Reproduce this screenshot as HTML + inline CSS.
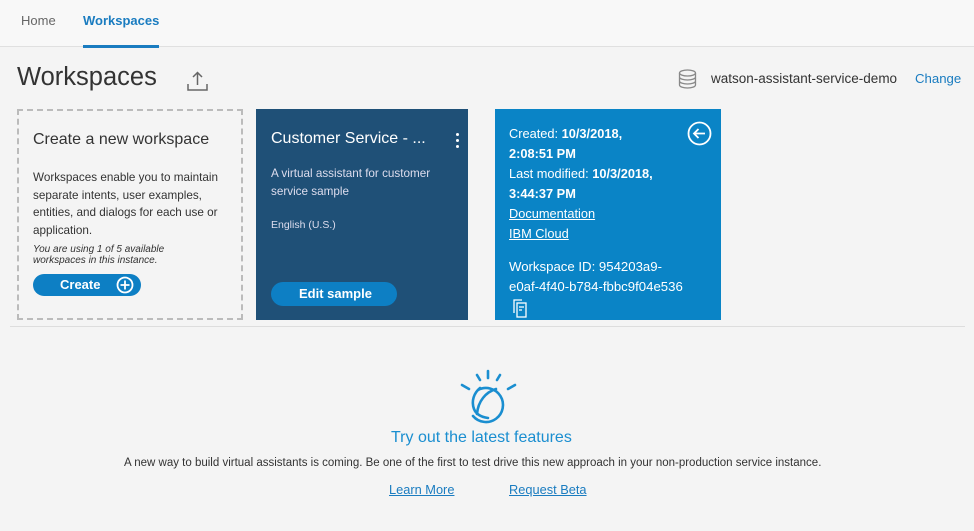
<!DOCTYPE html>
<html><head><meta charset="utf-8"><style>
*{margin:0;padding:0;box-sizing:border-box}
body{width:974px;height:531px;background:#f4f4f4;font-family:"Liberation Sans",sans-serif;position:relative;overflow:hidden;color:#333}
.a{position:absolute;white-space:nowrap}
.hdr{position:absolute;left:0;top:0;width:974px;height:47px;background:#f8f8f8;border-bottom:1px solid #e0e0e0}
.card{position:absolute;top:109px;height:211px}
.u{text-decoration:underline}
</style></head><body>
<div class="hdr"></div>
<div class="a" style="left:21px;top:13px;font-size:13px;color:#666">Home</div>
<div class="a" style="left:83px;top:13px;font-size:13px;color:#1a7cc0;font-weight:bold">Workspaces</div>
<div class="a" style="left:83px;top:45px;width:76px;height:3px;background:#1a7cc0"></div>

<div class="a" style="left:17px;top:63px;font-size:25.5px;color:#333">Workspaces</div>
<svg class="a" style="left:187px;top:71px" width="21" height="20" viewBox="0 0 21 20" fill="none" stroke="#666" stroke-width="1.5"><path d="M10.5 14V2M6 6l4.5-4.5L15 6M1 13v6h19v-6"/></svg>

<svg class="a" style="left:678px;top:69px" width="19" height="20" viewBox="0 0 19 20" fill="none" stroke="#888" stroke-width="1.3"><ellipse cx="9.5" cy="4" rx="8" ry="3"/><path d="M1.5 4v12c0 1.7 3.6 3 8 3s8-1.3 8-3V4M1.5 8c0 1.7 3.6 3 8 3s8-1.3 8-3M1.5 12c0 1.7 3.6 3 8 3s8-1.3 8-3"/></svg>
<div class="a" style="left:711px;top:71px;font-size:13.5px;color:#333">watson-assistant-service-demo</div>
<div class="a" style="left:915px;top:71px;font-size:13.2px;color:#1a7cc0">Change</div>

<div class="card" style="left:17px;width:226px;border:2px dashed #bbb"></div>
<div class="a" style="left:33px;top:131px;font-size:16px;color:#333">Create a new workspace</div>
<div class="a" style="left:33px;top:169px;font-size:11.7px;line-height:17.5px;color:#333">Workspaces enable you to maintain<br>separate intents, user examples,<br>entities, and dialogs for each use or<br>application.</div>
<div class="a" style="left:33px;top:244px;font-size:10px;line-height:11px;font-style:italic;color:#333">You are using 1 of 5 available<br>workspaces in this instance.</div>
<div class="a" style="left:33px;top:274px;width:108px;height:22px;border-radius:11px;background:#0d7fc4;color:#fff;font-size:13px;font-weight:bold;padding:3px 0 0 27px">Create</div>
<svg class="a" style="left:116px;top:276px" width="18" height="18" viewBox="0 0 18 18" fill="none" stroke="#fff" stroke-width="1.8"><circle cx="9" cy="9" r="7.5"/><path d="M9 4.5v9M4.5 9h9"/></svg>

<div class="card" style="left:256px;width:212px;background:#1f5077"></div>
<div class="a" style="left:271px;top:130px;font-size:16px;color:#fff">Customer Service - ...</div>
<div class="a" style="left:456px;top:133px;width:3px;height:3px;background:#fff;border-radius:50%;box-shadow:0 6px 0 #fff,0 12px 0 #fff"></div>
<div class="a" style="left:271px;top:165px;font-size:11.7px;line-height:17.5px;color:#dde">A virtual assistant for customer<br>service sample</div>
<div class="a" style="left:271px;top:219px;font-size:10.5px;color:#dde">English (U.S.)</div>
<div class="a" style="left:271px;top:282px;width:126px;height:24px;border-radius:12px;background:#0d7fc4;color:#fff;font-size:13px;font-weight:bold;padding:4px 0 0 28px">Edit sample</div>

<div class="card" style="left:495px;width:226px;background:#0a84c6"></div>
<div class="a" style="left:509px;top:124px;font-size:12.8px;line-height:20px;color:#fff">Created: <b>10/3/2018,</b><br><b>2:08:51 PM</b><br>Last modified: <b>10/3/2018,</b><br><b>3:44:37 PM</b><br><span class="u">Documentation</span><br><span class="u">IBM Cloud</span></div>
<div class="a" style="left:509px;top:257px;font-size:13.2px;line-height:20px;color:#fff">Workspace ID: 954203a9-<br>e0af-4f40-b784-fbbc9f04e536</div>
<svg class="a" style="left:687px;top:121px" width="25" height="25" viewBox="0 0 25 25" fill="none" stroke="#fff" stroke-width="1.8"><circle cx="12.5" cy="12.5" r="11"/><path d="M18 12.5H7M11.5 8l-4.5 4.5 4.5 4.5"/></svg>
<svg class="a" style="left:512px;top:299px" width="16" height="19" viewBox="0 0 16 19" fill="none" stroke="#fff" stroke-width="1.3"><path d="M2 14V1h8"/><rect x="5" y="4" width="9" height="14"/><path d="M7 8h5M7 11h3"/></svg>

<div class="a" style="left:10px;top:326px;width:955px;height:1px;background:#ddd"></div>

<svg class="a" style="left:458px;top:368px" width="62" height="60" viewBox="0 0 62 60" fill="none" stroke="#1a8ed0" stroke-width="2.6" stroke-linecap="round"><path d="M30 3v7M19 7l3 5M42 7l-3 5M4 17l7 4M57 17l-7 4"/><path d="M20 22a17 17 0 1 1 -5 26"/><path d="M22 20c-6 5-9 13-6 21 2 5 7 8 14 9"/><path d="M38 21c-10 3-18 12-19 25"/></svg>
<div class="a" style="left:391px;top:429px;font-size:16px;color:#1a8ed0">Try out the latest features</div>
<div class="a" style="left:124px;top:457px;font-size:11.5px;color:#333">A new way to build virtual assistants is coming. Be one of the first to test drive this new approach in your non-production service instance.</div>
<div class="a u" style="left:389px;top:482px;font-size:12.8px;color:#1a7cc0">Learn More</div>
<div class="a u" style="left:509px;top:482px;font-size:12.8px;color:#1a7cc0">Request Beta</div>
</body></html>
